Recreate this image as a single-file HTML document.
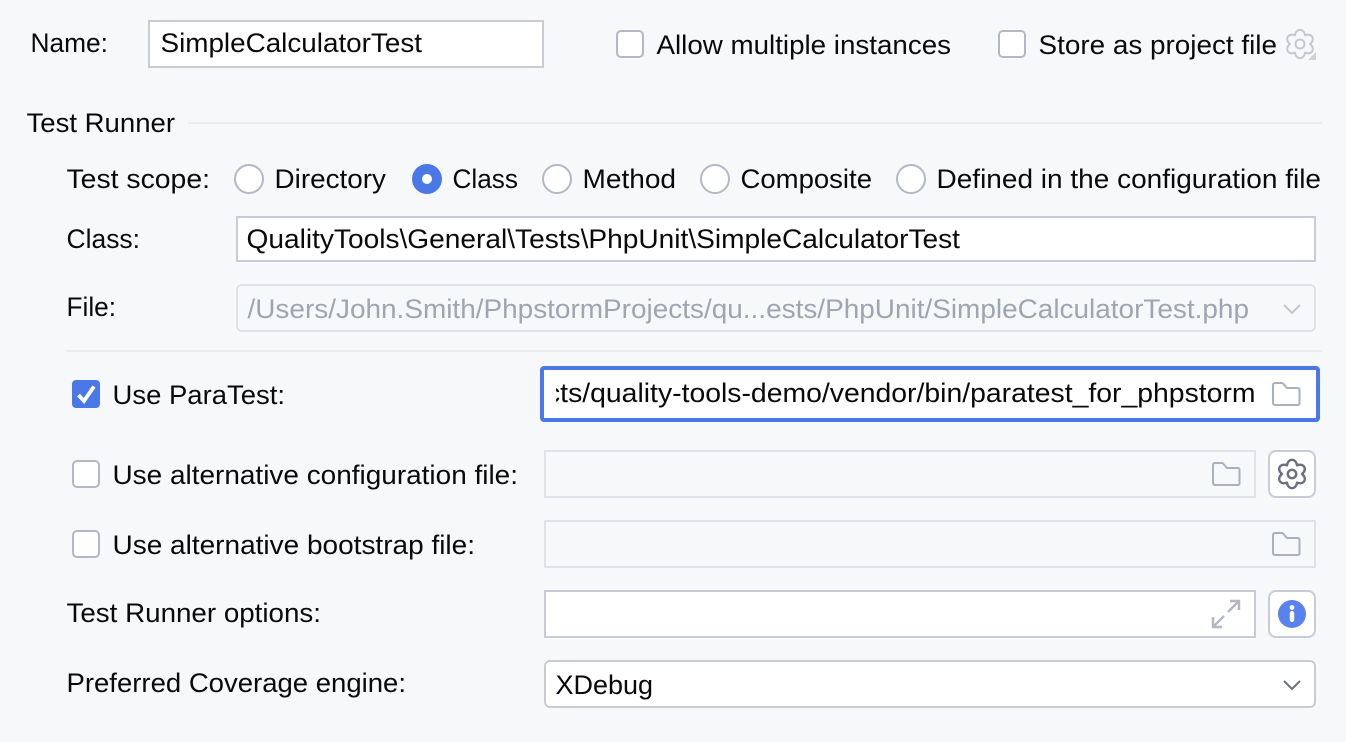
<!DOCTYPE html>
<html><head><meta charset="utf-8"><style>
html,body{margin:0;padding:0;background:#f7f8fa;width:1346px;height:742px;overflow:hidden}
svg{display:block}
text{font-family:"Liberation Sans",sans-serif;font-size:27px;fill:#0a0a0c}
.d{fill:#a0a5b2}
.w{fill:#fff;stroke:#c9ccd6;stroke-width:2}
.g{fill:#f7f8fa;stroke:#e0e2e7;stroke-width:2}
.c{fill:#fff;stroke:#b4b8c6;stroke-width:2}
.f{fill:none;stroke:#abb0c0;stroke-width:2;stroke-linejoin:round}
</style></head><body>
<svg width="1346" height="742" viewBox="0 0 1346 742" xmlns="http://www.w3.org/2000/svg">
<defs><clipPath id="cp"><rect x="556" y="370" width="710" height="48"/></clipPath></defs>
<rect width="1346" height="742" fill="#f7f8fa"/>

<text x="30.5" y="52" textLength="77.5" lengthAdjust="spacingAndGlyphs">Name:</text>
<rect class="w" x="149" y="21" width="394" height="46"/>
<text x="160.5" y="52" textLength="261.5" lengthAdjust="spacingAndGlyphs">SimpleCalculatorTest</text>

<rect class="c" x="617" y="31" width="26" height="26" rx="4"/>
<text x="656.5" y="54" textLength="294.5" lengthAdjust="spacingAndGlyphs">Allow multiple instances</text>
<rect class="c" x="999" y="31" width="26" height="26" rx="4"/>
<text x="1038.5" y="54" textLength="238.5" lengthAdjust="spacingAndGlyphs">Store as project file</text>
<g transform="translate(1300 44)" fill="none" stroke="#c6c8ce" stroke-width="2" stroke-linejoin="round">
<path d="M-5-8.66C-4-16 4-16 5-8.66C11.86-11.46 15.86-4.54 10 0C15.86 4.54 11.86 11.46 5 8.66C4 16-4 16-5 8.66C-11.86 11.46-15.86 4.54-10 0C-15.86-4.54-11.86-11.46-5-8.66Z"/>
<circle r="4.5"/></g>
<path d="M1316 52V60H1308Z" fill="#d0d2d8"/>

<text x="26.5" y="132" textLength="148.5" lengthAdjust="spacingAndGlyphs">Test Runner</text>
<rect x="188" y="122" width="1134" height="2" fill="#ebecf0"/>

<text x="66.5" y="188" textLength="143.5" lengthAdjust="spacingAndGlyphs">Test scope:</text>
<circle class="c" cx="249" cy="179" r="14"/>
<text x="274.5" y="188" textLength="111.5" lengthAdjust="spacingAndGlyphs">Directory</text>
<circle cx="427" cy="179" r="15" fill="#4a78e6"/><circle cx="427" cy="179" r="5" fill="#fff"/>
<text x="452.5" y="188" textLength="65.5" lengthAdjust="spacingAndGlyphs">Class</text>
<circle class="c" cx="557" cy="179" r="14"/>
<text x="582.5" y="188" textLength="93.5" lengthAdjust="spacingAndGlyphs">Method</text>
<circle class="c" cx="715" cy="179" r="14"/>
<text x="740.5" y="188" textLength="131.5" lengthAdjust="spacingAndGlyphs">Composite</text>
<circle class="c" cx="911" cy="179" r="14"/>
<text x="936.5" y="188" textLength="384.5" lengthAdjust="spacingAndGlyphs">Defined in the configuration file</text>

<text x="66.5" y="248" textLength="73.5" lengthAdjust="spacingAndGlyphs">Class:</text>
<rect class="w" x="237" y="217" width="1078" height="44"/>
<text x="246.5" y="248" textLength="713.5" lengthAdjust="spacingAndGlyphs">QualityTools\General\Tests\PhpUnit\SimpleCalculatorTest</text>

<text x="66.5" y="316" textLength="49.5" lengthAdjust="spacingAndGlyphs">File:</text>
<rect class="g" x="237" y="285" width="1078" height="46" rx="5"/>
<text class="d" x="247.5" y="318" textLength="1001.5" lengthAdjust="spacingAndGlyphs">/Users/John.Smith/PhpstormProjects/qu...ests/PhpUnit/SimpleCalculatorTest.php</text>
<path d="M1284 305L1292 313L1300 305" fill="none" stroke="#c2c5cd" stroke-width="2"/>

<rect x="66" y="350" width="1256" height="2" fill="#ebecf0"/>

<rect x="72" y="380" width="28" height="28" rx="4" fill="#4a78e6"/>
<path d="M78.5 395L84 401L94 386.5" fill="none" stroke="#fff" stroke-width="3.8"/>
<text x="112.5" y="404" textLength="172.5" lengthAdjust="spacingAndGlyphs">Use ParaTest:</text>
<rect x="542" y="368" width="776" height="52" rx="2" fill="#fff" stroke="#4a78e6" stroke-width="4"/>
<g clip-path="url(#cp)"><text x="546" y="402" textLength="709.5" lengthAdjust="spacingAndGlyphs">cts/quality-tools-demo/vendor/bin/paratest_for_phpstorm</text></g>
<path class="f" d="M1273 385a2 2 0 0 1 2-2h7.5l4.5 5h11a1.5 1.5 0 0 1 1.5 1.5v14a1.5 1.5 0 0 1-1.5 1.5h-23a2 2 0 0 1-2-2z"/>

<rect class="c" x="73" y="461" width="26" height="26" rx="4"/>
<text x="112.5" y="484" textLength="405.5" lengthAdjust="spacingAndGlyphs">Use alternative configuration file:</text>
<rect class="g" x="545" y="451" width="710" height="46"/>
<path class="f" d="M1213 465a2 2 0 0 1 2-2h7.5l4.5 5h11a1.5 1.5 0 0 1 1.5 1.5v14a1.5 1.5 0 0 1-1.5 1.5h-23a2 2 0 0 1-2-2z"/>
<rect class="w" x="1269" y="451" width="46" height="46" rx="7"/>
<g transform="translate(1292 474)" fill="none" stroke="#6c707e" stroke-width="2.4" stroke-linejoin="round">
<path d="M-5-8.66C-4-16 4-16 5-8.66C11.86-11.46 15.86-4.54 10 0C15.86 4.54 11.86 11.46 5 8.66C4 16-4 16-5 8.66C-11.86 11.46-15.86 4.54-10 0C-15.86-4.54-11.86-11.46-5-8.66Z"/>
<circle r="4.2"/></g>

<rect class="c" x="73" y="531" width="26" height="26" rx="4"/>
<text x="112.5" y="554" textLength="362.5" lengthAdjust="spacingAndGlyphs">Use alternative bootstrap file:</text>
<rect class="g" x="545" y="521" width="770" height="46"/>
<path class="f" d="M1273 535a2 2 0 0 1 2-2h7.5l4.5 5h11a1.5 1.5 0 0 1 1.5 1.5v14a1.5 1.5 0 0 1-1.5 1.5h-23a2 2 0 0 1-2-2z"/>

<text x="66.5" y="622" textLength="254.5" lengthAdjust="spacingAndGlyphs">Test Runner options:</text>
<rect class="w" x="545" y="591" width="710" height="46"/>
<path d="M1230 601H1239V610M1239 601L1228 612M1213 617V627H1222M1213 627L1224 616" fill="none" stroke="#b4b7c4" stroke-width="2.4"/>
<rect class="w" x="1269" y="591" width="46" height="46" rx="7"/>
<circle cx="1292" cy="614" r="14" fill="#5a82ee"/>
<circle cx="1292" cy="607.5" r="2.4" fill="#fff"/>
<rect x="1289.8" y="611" width="4.4" height="11" rx="2.2" fill="#fff"/>

<text x="66.5" y="692" textLength="339.5" lengthAdjust="spacingAndGlyphs">Preferred Coverage engine:</text>
<rect class="w" x="545" y="661" width="770" height="46" rx="5"/>
<text x="555.5" y="694" textLength="97.5" lengthAdjust="spacingAndGlyphs">XDebug</text>
<path d="M1284 681L1292 689L1300 681" fill="none" stroke="#6c707e" stroke-width="2"/>
</svg>
</body></html>
